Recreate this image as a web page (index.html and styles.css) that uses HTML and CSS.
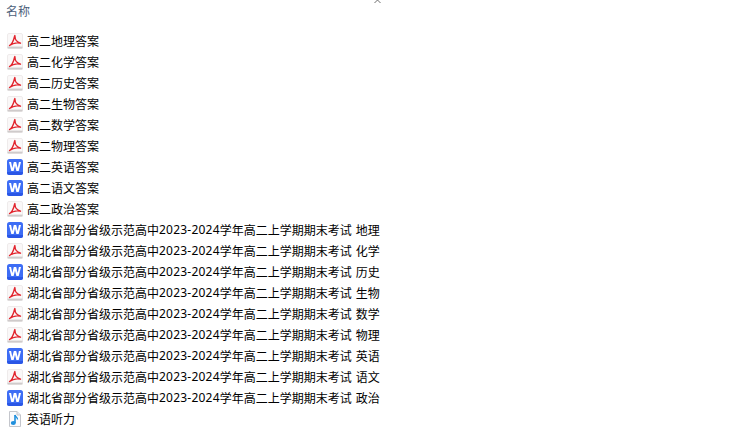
FILE: index.html
```html
<!DOCTYPE html>
<html lang="zh-CN">
<head>
  <meta charset="UTF-8" />
  <title>名称</title>
  <link rel="stylesheet" href="styles.css">
</head>
<body>
  <svg class="sprites" width="0" height="0">
    <symbol id="pdf" viewBox="0 0 16 16">
      <rect x="0.5" y="0.5" width="15" height="15" rx="1.5" fill="#faf8f8" stroke="#efebeb"/>
      <rect x="0.5" y="13.6" width="15" height="1.900" fill="#cfcbcb"/>
      <path d="M2.500 12.500C4.500 11.500 6.500 8 7.500 3.500C7.800 2 8 2 8 3.500C8 6 10 9 13.500 10.200C11 9.500 6 9.800 2.500 12.500Z" fill="none" stroke="#e2252e" stroke-width="1.350" stroke-linejoin="round"/>
    </symbol>
    <symbol id="word" viewBox="0 0 16 16">
      <rect width="16" height="16" rx="2.500" fill="#3d6df5"/>
      <path d="M0 13h16v.5a2.500 2.500 0 0 1-2.500 2.500h-11A2.500 2.500 0 0 1 0 13.500Z" fill="#2a56e6"/>
      <path d="M2 3h2.100l1.200 6 1.500-6h2.400l1.500 6 1.200-6H14l-2.300 9H9.400L8 6.700 6.600 12H4.300Z" fill="#fff"/>
    </symbol>
    <symbol id="audio" viewBox="0 0 16 16">
      <path d="M2.500.5h7.500l3.500 3.500v11.500h-11Z" fill="#fbfbfd" stroke="#c4c6cc"/>
      <path d="M10 .5v3.500h3.500" fill="#e6e8ee" stroke="#c4c6cc"/>
      <path d="M8 4v8" stroke="#1f8fdc" stroke-width="1.600" fill="none"/>
      <path d="M8 4c.4 2 2.800 2.200 2.500 4.500" stroke="#1f8fdc" stroke-width="1.300" fill="none"/>
      <ellipse cx="6.300" cy="12" rx="2.500" ry="2" fill="#1f8fdc"/>
    </symbol>
  </svg>

  <!-- Column header -->
  <div class="header">
    <span class="header-name">名称</span>
    <svg class="sort-arrow" width="7" height="3" viewBox="0 0 7 3"><path d="M.5 3L3.500 0L6.500 3" fill="none" stroke="#6e6e6e"/></svg>
  </div>

  <!-- File list -->
  <ul class="files">
    <li class="file"><svg class="icon"><use href="#pdf"/></svg>高二地理答案</li>
    <li class="file"><svg class="icon"><use href="#pdf"/></svg>高二化学答案</li>
    <li class="file"><svg class="icon"><use href="#pdf"/></svg>高二历史答案</li>
    <li class="file"><svg class="icon"><use href="#pdf"/></svg>高二生物答案</li>
    <li class="file"><svg class="icon"><use href="#pdf"/></svg>高二数学答案</li>
    <li class="file"><svg class="icon"><use href="#pdf"/></svg>高二物理答案</li>
    <li class="file"><svg class="icon"><use href="#word"/></svg>高二英语答案</li>
    <li class="file"><svg class="icon"><use href="#word"/></svg>高二语文答案</li>
    <li class="file"><svg class="icon"><use href="#pdf"/></svg>高二政治答案</li>
    <li class="file"><svg class="icon"><use href="#word"/></svg>湖北省部分省级示范高中<span class="year">2023-2024</span>学年高二上学期期末考试<span class="subject">地理</span></li>
    <li class="file"><svg class="icon"><use href="#pdf"/></svg>湖北省部分省级示范高中<span class="year">2023-2024</span>学年高二上学期期末考试<span class="subject">化学</span></li>
    <li class="file"><svg class="icon"><use href="#word"/></svg>湖北省部分省级示范高中<span class="year">2023-2024</span>学年高二上学期期末考试<span class="subject">历史</span></li>
    <li class="file"><svg class="icon"><use href="#pdf"/></svg>湖北省部分省级示范高中<span class="year">2023-2024</span>学年高二上学期期末考试<span class="subject">生物</span></li>
    <li class="file"><svg class="icon"><use href="#pdf"/></svg>湖北省部分省级示范高中<span class="year">2023-2024</span>学年高二上学期期末考试<span class="subject">数学</span></li>
    <li class="file"><svg class="icon"><use href="#pdf"/></svg>湖北省部分省级示范高中<span class="year">2023-2024</span>学年高二上学期期末考试<span class="subject">物理</span></li>
    <li class="file"><svg class="icon"><use href="#word"/></svg>湖北省部分省级示范高中<span class="year">2023-2024</span>学年高二上学期期末考试<span class="subject">英语</span></li>
    <li class="file"><svg class="icon"><use href="#pdf"/></svg>湖北省部分省级示范高中<span class="year">2023-2024</span>学年高二上学期期末考试<span class="subject">语文</span></li>
    <li class="file"><svg class="icon"><use href="#word"/></svg>湖北省部分省级示范高中<span class="year">2023-2024</span>学年高二上学期期末考试<span class="subject">政治</span></li>
    <li class="file"><svg class="icon"><use href="#audio"/></svg>英语听力</li>
  </ul>
</body>
</html>
```

FILE: styles.css
```css
html, body {
  height: 100%;
}

body {
  margin: 0;
  background: #fff;
  color: #000;
  font-family: "Noto Sans", "Noto Sans CJK SC", sans-serif;
  font-size: 12px;
  overflow: hidden;
}

.sprites {
  display: block;
  height: 0;
}

.header {
  position: relative;
  height: 30px;
  padding: 3px 0 0 6px;
  box-sizing: border-box;
  line-height: 17px;
  color: #4c607a;
}

.sort-arrow {
  position: absolute;
  top: 0;
  left: 374px;
}

.files {
  list-style: none;
  margin: 0;
  padding: 0 0 0 7px;
}

.file {
  display: flex;
  align-items: center;
  height: 21px;
  white-space: nowrap;
}

.icon {
  width: 16px;
  height: 16px;
  margin-right: 4px;
  flex: none;
}

.year {
  letter-spacing: 0.22px;
}

.subject {
  margin-left: 4px;
}
```
